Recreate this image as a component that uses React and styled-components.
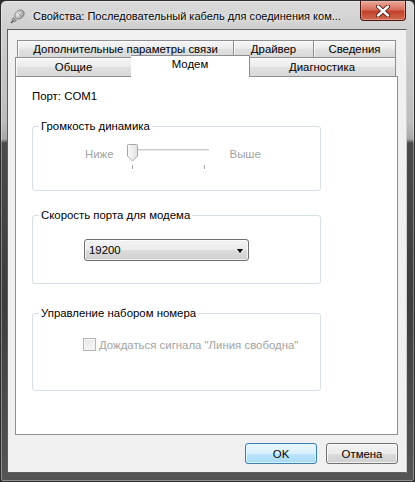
import React from 'react'
import styled, { createGlobalStyle } from 'styled-components'

const GlobalStyle = createGlobalStyle`
    html, body {
        margin: 0;
        padding: 0;
        background: #2b2b2b;
    }
    * {
        box-sizing: border-box;
    }
`

const tabsTop = ['Дополнительные параметры связи', 'Драйвер', 'Сведения']
const tabsBottom = ['Общие', 'Модем', 'Диагностика']
const topWidths = [217, 80, 82]
const bottomWidths = [117, 119, 147]

const CableIcon = () => (
    <svg width="16" height="16" viewBox="0 0 16 16">
        <defs>
            <radialGradient id="plug" cx="0.4" cy="0.35" r="0.7">
                <stop offset="0" stopColor="#f4f4f4" />
                <stop offset="1" stopColor="#8c8c8c" />
            </radialGradient>
        </defs>
        <path d="M1 15 L4 12" stroke="#5a5a5a" strokeWidth="1.6" />
        <path d="M3.5 9.5 L6.5 12.5 L4.5 14 L2 11.5 Z" fill="#a5a5a5" stroke="#6d6d6d" strokeWidth="0.7" />
        <ellipse cx="9.5" cy="6.5" rx="5.2" ry="4" transform="rotate(-40 9.5 6.5)"
            fill="url(#plug)" stroke="#777" strokeWidth="0.7" />
        <path d="M8 5 L11 8" stroke="#8a8a8a" strokeWidth="0.8" />
    </svg>
)

const CloseGlyph = () => (
    <svg width="14" height="12" viewBox="0 0 14 12">
        <path d="M2 1.5 L12 10.5 M12 1.5 L2 10.5" stroke="#4a1a12" strokeWidth="4.2" strokeLinecap="round" />
        <path d="M2 1.5 L12 10.5 M12 1.5 L2 10.5" stroke="#ffffff" strokeWidth="2.4" strokeLinecap="round" />
    </svg>
)

const SliderDrawing = () => (
    <svg width="90" height="28" viewBox="0 0 90 28">
        <line x1="4" y1="7.5" x2="84" y2="7.5" stroke="#c9c9c9" strokeWidth="1" />
        <line x1="4" y1="8.5" x2="84" y2="8.5" stroke="#ececec" strokeWidth="1" />
        <line x1="7.5" y1="23" x2="7.5" y2="27" stroke="#a8a8a8" strokeWidth="1" />
        <line x1="79.5" y1="23" x2="79.5" y2="27" stroke="#a8a8a8" strokeWidth="1" />
        <defs>
            <linearGradient id="thumb" x1="0" y1="0" x2="1" y2="0">
                <stop offset="0" stopColor="#fbfbfb" />
                <stop offset="1" stopColor="#e2e2e2" />
            </linearGradient>
        </defs>
        <path d="M2.5 3.5 Q2.5 2.5 3.5 2.5 L11.5 2.5 Q12.5 2.5 12.5 3.5 L12.5 14 L7.5 19 L2.5 14 Z"
            fill="url(#thumb)" stroke="#a6a6a6" strokeWidth="1" />
    </svg>
)

const App = () => {
    return (
        <>
            <GlobalStyle />
            <Window>
                <TitleBar>
                    <TitleIcon><CableIcon /></TitleIcon>
                    <Title>Свойства: Последовательный кабель для соединения ком...</Title>
                    <CloseButton><CloseGlyph /></CloseButton>
                </TitleBar>
                <Client>
                    <TabStrip>
                        <TabRow $inset>
                            {tabsTop.map((t, i) => (
                                <Tab key={t} $width={topWidths[i]} $inset>{t}</Tab>
                            ))}
                        </TabRow>
                        <TabRow>
                            {tabsBottom.map((t, i) => (
                                <Tab key={t} $width={bottomWidths[i]} $active={t === 'Модем'}>{t}</Tab>
                            ))}
                        </TabRow>
                    </TabStrip>
                    <Panel>
                        <PortLine>Порт: COM1</PortLine>

                        <Group $gap={14} $pt={8} $pb={20}>
                            <Legend>Громкость динамика</Legend>
                            <SliderRow>
                                <SliderLabel>Ниже</SliderLabel>
                                <SliderDrawing />
                                <SliderLabel $right>Выше</SliderLabel>
                            </SliderRow>
                        </Group>

                        <Group $gap={16} $pt={16} $pb={22}>
                            <Legend>Скорость порта для модема</Legend>
                            <Select>
                                <span>19200</span>
                                <Arrow />
                            </Select>
                        </Group>

                        <Group $gap={21} $pt={16} $pb={37}>
                            <Legend>Управление набором номера</Legend>
                            <CheckRow>
                                <CheckBox />
                                <CheckLabel>Дождаться сигнала "Линия свободна"</CheckLabel>
                            </CheckRow>
                        </Group>
                    </Panel>
                    <ButtonRow>
                        <Button $default>OK</Button>
                        <Button>Отмена</Button>
                    </ButtonRow>
                </Client>
            </Window>
        </>
    )
}

export default App

const Window = styled.div`
    width: 415px;
    height: 482px;
    display: flex;
    flex-direction: column;
    padding: 0 7px 8px 6px;
    border: 1px solid #2e2e2e;
    border-radius: 6px 6px 3px 3px;
    background: linear-gradient(to bottom,
        #dadada 0, #cfcfcf 28px, #bdbdbd 120px, #a9a9a9 138px,
        #4a4a4a 142px, #3d3d3d 300px, #555555 100%);
    box-shadow: inset 0 0 0 1px rgba(255, 255, 255, 0.35);
    font-family: 'Liberation Sans', Arial, sans-serif;
    font-size: 11.4px;
    color: #000;
`

const TitleBar = styled.div`
    height: 28px;
    display: flex;
    align-items: center;
    padding-left: 3px;
`

const TitleIcon = styled.div`
    width: 16px;
    height: 16px;
    margin-top: 1px;
    display: flex;
`

const Title = styled.div`
    margin-left: 7px;
    margin-top: 1px;
    flex: 1;
    white-space: nowrap;
    font-size: 11px;
    text-shadow: 0 0 6px rgba(255, 255, 255, 0.9), 0 0 2px rgba(255, 255, 255, 0.8);
`

const CloseButton = styled.div`
    align-self: flex-start;
    width: 46px;
    height: 20px;
    margin-right: 1px;
    display: flex;
    align-items: center;
    justify-content: center;
    border: 1px solid #4b1810;
    border-top: none;
    border-radius: 0 0 4px 4px;
    background: linear-gradient(to bottom, #e9a899 0, #d8705c 45%, #c2412a 55%, #cf6a50 100%);
    box-shadow: inset 0 0 0 1px rgba(255, 200, 190, 0.45);
`

const Client = styled.div`
    flex: 1;
    display: flex;
    flex-direction: column;
    background: #f0f0f0;
    border: 1px solid #5e5e5e;
    border-right-color: #cfcfcf;
    padding: 10px 8px 8px 7px;
`

const TabStrip = styled.div`
    display: flex;
    flex-direction: column;
`

const TabRow = styled.div`
    display: flex;
    align-items: flex-start;
    padding: 0 ${p => (p.$inset ? 2 : 0)}px 0 ${p => (p.$inset ? 2 : 0)}px;
`

const Tab = styled.div`
    width: ${p => p.$width}px;
    flex: 0 0 auto;
    height: ${p => (p.$active ? 22 : p.$inset ? 17 : 19)}px;
    margin: ${p => (p.$active ? '-2px -1px -1px -1px' : '0')};
    position: ${p => (p.$active ? 'relative' : 'static')};
    z-index: ${p => (p.$active ? 1 : 'auto')};
    display: flex;
    align-items: ${p => (p.$active ? 'flex-start' : 'center')};
    justify-content: center;
    padding-top: ${p => (p.$active ? 2 : 0)}px;
    border: 1px solid #8c8e94;
    border-bottom: none;
    background: ${p => (p.$active
        ? '#ffffff'
        : 'linear-gradient(to bottom, #f6f6f6 0, #ececec 45%, #dfdfdf 55%, #d9d9d9 100%)')};
    box-shadow: inset 1px 1px 0 rgba(255, 255, 255, 0.8);
    white-space: nowrap;

    & + & {
        border-left: ${p => (p.$active ? '1px solid #8c8e94' : 'none')};
    }
`

const Panel = styled.div`
    flex: 1;
    display: flex;
    flex-direction: column;
    background: #ffffff;
    border: 1px solid #8c8e94;
    padding: 11px 0 0 16px;
`

const PortLine = styled.div`
    line-height: 16px;
    height: 16px;
`

const Group = styled.fieldset`
    width: 289px;
    margin: ${p => p.$gap}px 0 0 0;
    padding: ${p => p.$pt}px 0 ${p => p.$pb}px 6px;
    border: 1px solid #d5dfe5;
    border-radius: 3px;
    min-width: 0;
`

const Legend = styled.legend`
    padding: 0 2px;
    margin: 0;
    line-height: 16px;
    height: 16px;
`

const SliderRow = styled.div`
    display: flex;
    align-items: flex-start;
    height: 28px;
    padding-left: 46px;
`

const SliderLabel = styled.span`
    margin-top: 4px;
    line-height: 16px;
    color: #a3a3a3;
    margin-left: ${p => (p.$right ? 15 : 0)}px;
    margin-right: ${p => (p.$right ? 0 : 11)}px;
`

const Select = styled.div`
    margin-left: 45px;
    width: 165px;
    height: 22px;
    display: flex;
    align-items: center;
    justify-content: space-between;
    padding: 0 5px 0 4px;
    border: 1px solid #707070;
    border-radius: 3px;
    background: linear-gradient(to bottom, #f2f2f2 0, #ebebeb 50%, #dddddd 50%, #cfcfcf 100%);
    box-shadow: inset 0 0 0 1px rgba(255, 255, 255, 0.7);
`

const Arrow = styled.span`
    width: 0;
    height: 0;
    border-left: 3.5px solid transparent;
    border-right: 3.5px solid transparent;
    border-top: 4px solid #000;
    margin-top: 1px;
`

const CheckRow = styled.div`
    display: flex;
    align-items: center;
    height: 16px;
    padding-left: 44px;
`

const CheckBox = styled.span`
    width: 13px;
    height: 13px;
    border: 1px solid #b5b5b5;
    background: linear-gradient(135deg, #e6e6e6, #f7f7f7);
    box-shadow: inset 0 0 0 1px #f4f4f4;
    margin-top: -1px;
`

const CheckLabel = styled.span`
    margin-left: 3px;
    line-height: 16px;
    color: #a3a3a3;
`

const ButtonRow = styled.div`
    display: flex;
    justify-content: flex-end;
    gap: 9px;
    margin-top: 8px;
`

const Button = styled.div`
    width: 72px;
    height: 21px;
    display: flex;
    align-items: center;
    justify-content: center;
    border: 1px solid ${p => (p.$default ? '#3c7fb1' : '#707070')};
    border-radius: 3px;
    background: ${p => (p.$default
        ? 'linear-gradient(to bottom, #eaf6fd 0, #d9f0fc 50%, #bee6fd 50%, #a7d9f5 100%)'
        : 'linear-gradient(to bottom, #f2f2f2 0, #ebebeb 50%, #dddddd 50%, #cfcfcf 100%)')};
    box-shadow: inset 0 0 0 1px ${p => (p.$default ? 'rgba(220, 245, 255, 0.9)' : 'rgba(255, 255, 255, 0.7)')};
`
